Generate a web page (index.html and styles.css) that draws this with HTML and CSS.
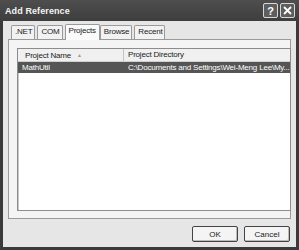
FILE: index.html
```html
<!DOCTYPE html>
<html lang="en">

<head>
    <meta charset="UTF-8">
    <title>Add Reference</title>
    <link rel="stylesheet" href="styles.css">
</head>

<body>
    <div class="window">
        <div class="titlebar">
            <span class="title">Add Reference</span>
            <div class="caption-btns">
                <span class="cap-btn">?</span>
                <span class="cap-btn">
                    <svg width="9" height="9" viewBox="0 0 9 9">
                        <path d="M1 1 L8 8 M8 1 L1 8" stroke="#fff" stroke-width="1.8" />
                    </svg>
                </span>
            </div>
        </div>

        <div class="client">
            <ul class="tabs">
                <li class="tab">.NET</li>
                <li class="tab">COM</li>
                <li class="tab active">Projects</li>
                <li class="tab">Browse</li>
                <li class="tab">Recent</li>
            </ul>

            <div class="panel">
                <div class="list">
                    <div class="list-head">
                        <div class="col col-name">Project Name <span class="sort">&#9650;</span></div>
                        <div class="col col-dir">Project Directory</div>
                    </div>
                    <div class="list-row selected">
                        <div class="col col-name">MathUtil</div>
                        <div class="col col-dir">C:\Documents and Settings\Wei-Meng Lee\My...</div>
                    </div>
                </div>
            </div>

            <div class="footer">
                <button class="btn">OK</button>
                <button class="btn">Cancel</button>
            </div>
        </div>
    </div>
</body>

</html>
```

FILE: styles.css
```css
* {
    margin: 0;
    padding: 0;
    box-sizing: border-box;
}

body {
    font-family: "Liberation Sans", Arial, sans-serif;
    font-size: 8px;
    letter-spacing: -0.2px;
    color: #222;
    background: #3a3a3a;
}

.window {
    width: 299px;
    height: 250px;
    display: flex;
    flex-direction: column;
    background: #3a3a3a;
    padding: 0 3px 3px 3px;
}

.titlebar {
    height: 21px;
    display: flex;
    align-items: center;
    justify-content: space-between;
    background: linear-gradient(#4e4e4e, #444 60%, #3e3e3e);
    margin: 0 -3px;
    padding: 0 4px 0 5px;
}

.title {
    color: #f4f4f4;
    font-weight: bold;
    font-size: 9px;
    letter-spacing: 0.1px;
}

.caption-btns {
    display: flex;
    gap: 2px;
}

.cap-btn {
    width: 15px;
    height: 15px;
    border: 1px solid #d8d8d8;
    border-radius: 2px;
    background: #5e5e5e;
    color: #fff;
    font-weight: bold;
    font-size: 11px;
    display: flex;
    align-items: center;
    justify-content: center;
}

.client {
    flex: 1;
    background: #e6e6e6;
    display: flex;
    flex-direction: column;
    padding: 3px 5px 0 5px;
}

.tabs {
    list-style: none;
    display: flex;
    align-items: flex-end;
    padding-left: 3px;
    height: 15px;
    position: relative;
    z-index: 1;
}

.tab {
    height: 14px;
    padding: 0 2px 0 3px;
    line-height: 12px;
    border: 1px solid #9a9a9a;
    border-bottom: none;
    border-radius: 2px 2px 0 0;
    background: #f2f2f2;
    margin-right: 2px;
}

.tab.active {
    height: 16px;
    background: #fafafa;
    margin-bottom: -1px;
    padding: 0 3px;
    margin-right: 0;
}

.panel {
    height: 180px;
    border: 1px solid #9a9a9a;
    background: #f4f4f4;
    padding: 8px 7px 7px 8px;
    display: flex;
}

.list {
    flex: 1;
    background: #fff;
    border: 1px solid #8c8c8c;
    box-shadow: inset 1px 1px 0 #c8c8c8;
}

.list-head {
    display: flex;
    height: 13px;
    line-height: 12px;
    background: #f0f0f0;
    border-bottom: 1px solid #d0d0d0;
}

.list-head .col-name {
    border-right: 1px solid #c4c4c4;
    padding-left: 7px;
}

.sort {
    font-size: 5px;
    color: #999;
    margin-left: 4px;
    vertical-align: 1px;
}

.col-name {
    width: 106px;
    padding-left: 4px;
}

.col-dir {
    flex: 1;
    padding-left: 4px;
    white-space: nowrap;
    overflow: hidden;
}

.list-row {
    display: flex;
    height: 11px;
    line-height: 11px;
}

.list-row.selected {
    background: #555;
    color: #fff;
}

.footer {
    flex: 1;
    display: flex;
    justify-content: flex-end;
    align-items: center;
    gap: 6px;
    padding: 2px 1px 0 0;
}

.btn {
    width: 46px;
    height: 16px;
    font-family: "Liberation Sans", Arial, sans-serif;
    font-size: 8px;
    color: #222;
    background: #f4f4f4;
    border: 1px solid #444;
    border-radius: 2px;
    box-shadow: inset -1px -1px 0 #bbb;
}
```
